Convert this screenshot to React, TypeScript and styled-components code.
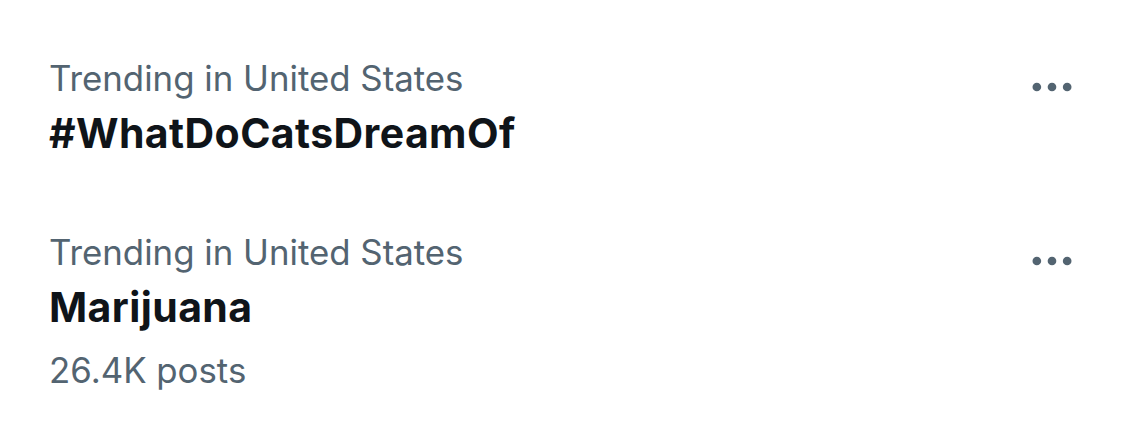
import React from "react";
import styled, { createGlobalStyle } from "styled-components";

const GlobalStyle = createGlobalStyle`
  html, body {
    margin: 0;
    padding: 0;
    background: #ffffff;
  }
  body {
    font-family: Inter, "Noto Sans", "Liberation Sans", sans-serif;
    -webkit-font-smoothing: antialiased;
  }
`;

const List = styled.div`
  display: flex;
  flex-direction: column;
  padding: 21px 0 0;
  width: 1125px;
  box-sizing: border-box;
`;

const Row = styled.div`
  display: flex;
  align-items: flex-start;
  justify-content: space-between;
  padding: 33px 47px 31px 49px;
`;

const Content = styled.div`
  display: flex;
  flex-direction: column;
`;

const Meta = styled.div`
  font-size: 34.8px;
  line-height: 48px;
  color: #536471;
  font-weight: 400;
`;

const Title = styled.div`
  font-size: 41px;
  line-height: 62px;
  letter-spacing: 0.4px;
  color: #0f1419;
  font-weight: 700;
`;

const Count = styled.div`
  font-size: 34.8px;
  line-height: 64px;
  color: #536471;
  font-weight: 400;
`;

const MoreButton = styled.button`
  display: flex;
  align-items: center;
  justify-content: center;
  margin-top: 7px;
  padding: 0;
  border: none;
  background: transparent;
  width: 52px;
  height: 52px;
  color: #536471;
  cursor: pointer;
`;

const MoreIcon = () => (
  <svg width="52" height="52" viewBox="0 0 24 24" fill="currentColor" aria-hidden="true">
    <circle cx="5" cy="12" r="2" />
    <circle cx="12" cy="12" r="2" />
    <circle cx="19" cy="12" r="2" />
  </svg>
);

type Trend = { context: string; name: string; posts?: string };

const trends: Trend[] = [
  { context: "Trending in United States", name: "#WhatDoCatsDreamOf" },
  { context: "Trending in United States", name: "Marijuana", posts: "26.4K posts" },
];

export default function App() {
  return (
    <>
      <GlobalStyle />
      <List>
        {trends.map((t) => (
          <Row key={t.name}>
            <Content>
              <Meta>{t.context}</Meta>
              <Title>{t.name}</Title>
              {t.posts && <Count>{t.posts}</Count>}
            </Content>
            <MoreButton aria-label="More">
              <MoreIcon />
            </MoreButton>
          </Row>
        ))}
      </List>
    </>
  );
}
